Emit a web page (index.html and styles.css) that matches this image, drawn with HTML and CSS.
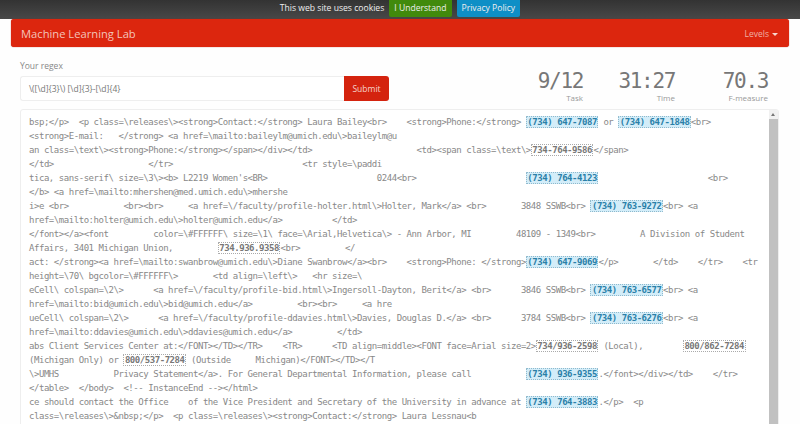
FILE: index.html
```html
<!DOCTYPE html>
<html lang="en">
<head>
<meta charset="utf-8">
<title>Machine Learning Lab</title>
<link rel="stylesheet" href="styles.css">
</head>
<body>
<div class="cookie">
  <span class="cookie-text">This web site uses cookies</span>
  <a class="cbtn green">I Understand</a>
  <a class="cbtn blue">Privacy Policy</a>
</div>
<div class="wrap">
  <nav class="navbar">
    <span class="brand">Machine Learning Lab</span>
    <span class="levels">Levels<i class="caret"></i></span>
  </nav>
  <div class="top">
    <div class="form">
      <label class="lbl">Your regex</label>
      <div class="group">
        <div class="input">\([\d]{3}\) [\d]{3}-[\d]{4}</div>
        <div class="submit">Submit</div>
      </div>
    </div>
    <div class="stats">
      <div class="stat s1"><div class="num">9/12</div><div class="cap">Task</div></div>
      <div class="stat s2"><div class="num">31:27</div><div class="cap">Time</div></div>
      <div class="stat s3"><div class="num">70.3</div><div class="cap">F-measure</div></div>
    </div>
  </div>
  <div class="panel">
<pre class="code">bsp;&lt;/p&gt;  &lt;p class=\releases\&gt;&lt;strong&gt;Contact:&lt;/strong&gt; Laura Bailey&lt;br&gt;    &lt;strong&gt;Phone:&lt;/strong&gt; <b class="m">(734) 647-7087</b> or <b class="m">(734) 647-1848</b>&lt;br&gt;
&lt;strong&gt;E-mail:   &lt;/strong&gt; &lt;a href=\mailto:baileylm@umich.edu\&gt;baileylm@u
an class=\text\&gt;&lt;strong&gt;Phone:&lt;/strong&gt;&lt;/span&gt;&lt;/div&gt;&lt;/td&gt;                     &lt;td&gt;&lt;span class=\text\&gt;<b class="n">734-764-9586</b>&lt;/span&gt;
&lt;/td&gt;                   &lt;/tr&gt;                          &lt;tr style=\paddi
tica, sans-serif\ size=\3\&gt;&lt;b&gt; L2219 Women's&lt;BR&gt;                      0244&lt;br&gt;                      <b class="m">(734) 764-4123</b>                      &lt;br&gt;
&lt;/b&gt; &lt;a href=\mailto:mhershen@med.umich.edu\&gt;mhershe
i&gt;e &lt;br&gt;           &lt;br&gt;&lt;br&gt;     &lt;a href=\/faculty/profile-holter.html\&gt;Holter, Mark&lt;/a&gt; &lt;br&gt;       3848 SSWB&lt;br&gt; <b class="m">(734) 763-9272</b>&lt;br&gt; &lt;a
href=\mailto:holter@umich.edu\&gt;holter@umich.edu&lt;/a&gt;          &lt;/td&gt;
&lt;/font&gt;&lt;/a&gt;&lt;font         color=\#FFFFFF\ size=\1\ face=\Arial,Helvetica\&gt; - Ann Arbor, MI         48109 - 1349&lt;br&gt;         A Division of Student
Affairs, 3401 Michigan Union,         <b class="n">734.936.9358</b>&lt;br&gt;         &lt;/
act: &lt;/strong&gt;&lt;a href=\mailto:swanbrow@umich.edu\&gt;Diane Swanbrow&lt;/a&gt;&lt;br&gt;    &lt;strong&gt;Phone: &lt;/strong&gt;<b class="m">(734) 647-9069</b>&lt;/p&gt;       &lt;/td&gt;    &lt;/tr&gt;    &lt;tr
height=\70\ bgcolor=\#FFFFFF\&gt;       &lt;td align=\left\&gt;   &lt;hr size=\
eCell\ colspan=\2\&gt;      &lt;a href=\/faculty/profile-bid.html\&gt;Ingersoll-Dayton, Berit&lt;/a&gt; &lt;br&gt;      3846 SSWB&lt;br&gt; <b class="m">(734) 763-6577</b>&lt;br&gt; &lt;a
href=\mailto:bid@umich.edu\&gt;bid@umich.edu&lt;/a&gt;         &lt;br&gt;&lt;br&gt;     &lt;a hre
ueCell\ colspan=\2\&gt;      &lt;a href=\/faculty/profile-ddavies.html\&gt;Davies, Douglas D.&lt;/a&gt; &lt;br&gt;      3784 SSWB&lt;br&gt; <b class="m">(734) 763-6276</b>&lt;br&gt; &lt;a
href=\mailto:ddavies@umich.edu\&gt;ddavies@umich.edu&lt;/a&gt;         &lt;/td&gt;
abs Client Services Center at:&lt;/FONT&gt;&lt;/TD&gt;&lt;/TR&gt;    &lt;TR&gt;      &lt;TD align=middle&gt;&lt;FONT face=Arial size=2&gt;<b class="n">734/936-2598</b> (Local),        <b class="n">800/862-7284</b>
(Michigan Only) or <b class="n">800/537-7284</b> (Outside     Michigan)&lt;/FONT&gt;&lt;/TD&gt;&lt;/T
\&gt;UMHS           Privacy Statement&lt;/a&gt;. For General Departmental Information, please call           <b class="m">(734) 936-9355</b>.&lt;/font&gt;&lt;/div&gt;&lt;/td&gt;    &lt;/tr&gt;
&lt;/table&gt;  &lt;/body&gt;  &lt;!-- InstanceEnd --&gt;&lt;/html&gt;
ce should contact the Office    of the Vice President and Secretary of the University in advance at <b class="m">(734) 764-3883</b>.&lt;/p&gt;  &lt;p
class=\releases\&gt;&amp;nbsp;&lt;/p&gt;  &lt;p class=\releases\&gt;&lt;strong&gt;Contact:&lt;/strong&gt; Laura Lessnau&lt;b
                                                                                                    <b class="m">(734) 764-3883</b></pre>
    <div class="scrollbar"><div class="arrow"></div><div class="thumb"></div></div>
  </div>
</div>
</body>
</html>
```
FILE: styles.css
```css
* { box-sizing: border-box; }
html, body { margin: 0; height: 424px; overflow: hidden; }
body { background: #fefefe; font-family: "Open Sans", sans-serif; color: #777; }
.cookie { height: 19px; background: linear-gradient(#333, #484848); display: flex; justify-content: center; align-items: flex-start; gap: 5px; font-size: 8.6px; color: #eee; line-height: 17px; }
.cbtn { display: block; height: 17px; padding: 0 5px; color: #eee; border-radius: 0 0 2px 2px; }
.green { background: #418a0c; }
.blue { background: #0e8fc6; }
.wrap { padding: 0 11px; }
.navbar { height: 28px; background: #dc260e; border-radius: 3px; display: flex; justify-content: space-between; align-items: center; padding: 0 11px 0 10px; box-shadow: 0 0 1px #b01c08; }
.brand { font-size: 11.2px; color: #f3c4ba; }
.levels { font-size: 8.5px; color: #f0b0a5; }
.caret { display: inline-block; width: 0; height: 0; margin-left: 3px; vertical-align: middle; border-top: 3px solid #f8d8d0; border-left: 3px solid transparent; border-right: 3px solid transparent; }
.top { display: flex; height: 62px; }
.form { width: 380px; margin-left: 9px; padding-top: 13px; }
.lbl { display: block; font-size: 8.5px; color: #888; line-height: 12px; }
.group { display: flex; margin-top: 4px; height: 25px; width: 369px; }
.input { flex: 1; background: #fff; border: 1px solid #eee; border-right: 0; border-radius: 3px 0 0 3px; font-size: 8.5px; color: #777; line-height: 23px; padding-left: 8px; }
.submit { width: 45px; background: #d4230e; color: #f4d3cc; font-size: 8.5px; line-height: 25px; text-align: center; border-radius: 0 3px 3px 0; }
.stats { position: relative; flex: 1; }
.stat { position: absolute; top: 22px; text-align: right; }
.s1 { right: 206px; }
.s2 { right: 114px; }
.s3 { right: 21px; }
.num { font-family: "DejaVu Sans Mono", monospace; font-size: 21px; line-height: 24px; color: #777; letter-spacing: -1.35px; white-space: nowrap; }
.cap { font-size: 8px; line-height: 9px; color: #999; }
.panel { position: relative; height: 320px; margin: 0 0 0 9px; width: 759px; background: #fff; border: 1px solid #eee; border-radius: 3px 3px 0 0; overflow: hidden; }
.code { margin: 0; padding: 5px 0 0 8px; font-family: "DejaVu Sans Mono", monospace; font-size: 9px; letter-spacing: -0.45px; line-height: 14px; color: #888; white-space: pre; overflow: hidden; }
.m, .n { font-weight: bold; padding: 0 .5px; border: 1px dotted #aaa; border-radius: 1px; }
.m { background: #d3edf9; color: #2a80a8; border-color: #8fb9cc; }
.n { color: #777; }
.scrollbar { position: absolute; top: 0; right: 0; width: 9px; height: 100%; background: #f1f1f1; }
.arrow { height: 9px; position: relative; }
.arrow::after { content: ""; position: absolute; left: 2px; top: 3px; border-bottom: 3px solid #777; border-left: 2.5px solid transparent; border-right: 2.5px solid transparent; }
.thumb { position: absolute; top: 9px; left: 0; right: 0; bottom: 0; background: #c1c1c1; }
```
